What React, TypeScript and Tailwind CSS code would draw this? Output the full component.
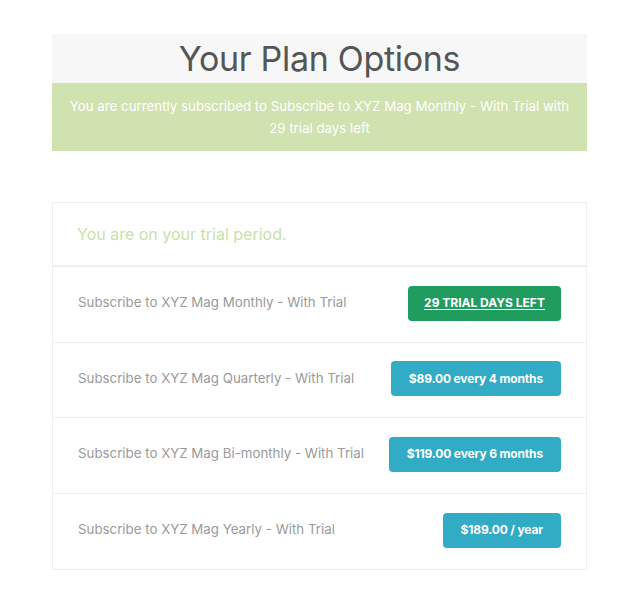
import React from 'react';

type Plan = {
  name: string;
  label: string;
  current?: boolean;
};

const plans: Plan[] = [
  { name: 'Subscribe to XYZ Mag Monthly - With Trial', label: '29 TRIAL DAYS LEFT', current: true },
  { name: 'Subscribe to XYZ Mag Quarterly - With Trial', label: '$89.00 every 4 months' },
  { name: 'Subscribe to XYZ Mag Bi-monthly - With Trial', label: '$119.00 every 6 months' },
  { name: 'Subscribe to XYZ Mag Yearly - With Trial', label: '$189.00 / year' },
];

export default function App() {
  return (
    <div className="min-h-screen bg-white pt-[34px] font-['Inter',sans-serif]">
      <div className="ml-[52px] w-[535px]">
        <div className="bg-[#f7f7f7] h-[49px] flex items-center justify-center">
          <h1 className="text-[34px] leading-none text-[#555555] tracking-[-0.3px]">Your Plan Options</h1>
        </div>
        <div className="bg-[#cfe2b0] h-[68px] flex items-center justify-center px-4">
          <p className="text-[13.3px] leading-[22px] text-white text-center">
            You are currently subscribed to Subscribe to XYZ Mag Monthly - With Trial with
            <br />
            29 trial days left
          </p>
        </div>

        <div className="mt-[51px] border border-[#efefef]">
          <div className="h-[64px] flex items-center px-[24px] border-b-2 border-[#efefef]">
            <p className="text-[16px] text-[#c8e1a8]">You are on your trial period.</p>
          </div>
          {plans.map((plan, i) => (
            <div
              key={plan.name}
              className={
                'h-[75.5px] flex items-center justify-between pl-[25px] pr-[25px] pb-[2px] ' +
                (i < plans.length - 1 ? 'border-b border-[#f0f0f0]' : '')
              }
            >
              <span className="text-[13.3px] text-[#9a9a9a]">{plan.name}</span>
              {plan.current ? (
                <span className="h-[35px] w-[153px] flex items-center justify-center rounded-[4px] bg-[#219c5f] text-white text-[12px] font-bold underline underline-offset-2">
                  {plan.label}
                </span>
              ) : (
                <span className="h-[35px] px-[18px] flex items-center justify-center rounded-[4px] bg-[#32abc5] text-white text-[12px] font-bold tracking-[-0.15px]">
                  {plan.label}
                </span>
              )}
            </div>
          ))}
        </div>
      </div>
    </div>
  );
}
